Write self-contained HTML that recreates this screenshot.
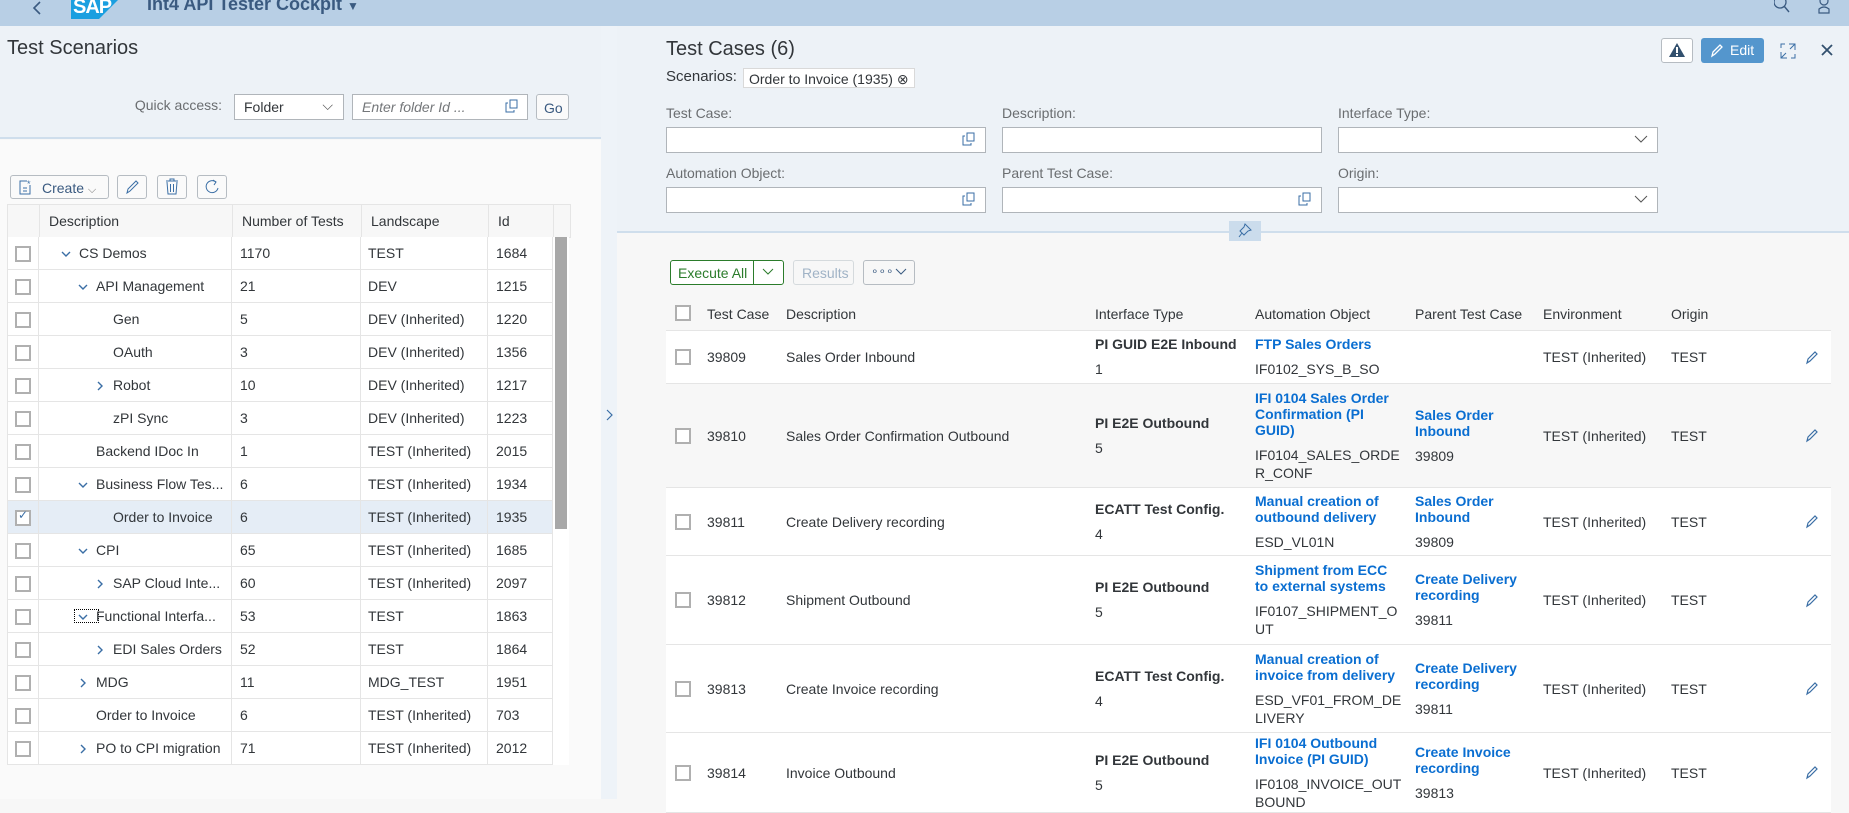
<!DOCTYPE html>
<html><head><meta charset="utf-8">
<style>
*{box-sizing:border-box;margin:0;padding:0}
body{width:1849px;height:799px;overflow:hidden;font-family:"Liberation Sans",sans-serif;font-size:14px;color:#32363a;background:#f7f7f7;position:relative}
.a{position:absolute}
.hdr{left:0;top:0;width:1849px;height:26px;background:#b8cfe5}
.lt{left:0;top:26px;width:601px;height:112px;background:#edf2f7}
.lb{left:0;top:140px;width:601px;height:659px;background:#fafafa}
.strip{left:601px;top:26px;width:16px;height:773px;background:#eef3f8}
.rt{left:617px;top:26px;width:1232px;height:206px;background:#edf2f7}
.rb{left:617px;top:234px;width:1232px;height:565px;background:#f7f7f7}
.line{height:2px;background:#cfdeec}
.inp{background:#fff;border:1px solid #b0b5ba;height:26px}
.btn{border:1px solid #b6bcc2;border-radius:3px;background:#fafafa}
.lbl{color:#6a6d70;font-size:14px}
.cb{width:16px;height:16px;border:2px solid #b0b0b0;background:#fff}
table.lt2{border-collapse:collapse;position:absolute;left:7px;top:204px;background:#fff}
table.lt2 td{height:33px;border:1px solid #e5e5e5;padding:0 0 0 9px;white-space:nowrap;font-size:14px}
table.lt2 tr.h td{background:#f7f7f7;color:#32363a}
.rw{position:absolute;left:666px;width:1165px;background:#fff;border-bottom:1px solid #e5e5e5}
.c{position:absolute;top:0;height:100%;display:flex;flex-direction:column;justify-content:center}
.b{font-weight:bold;line-height:16px}
.lk{color:#0a6ed1;font-weight:bold;line-height:16px}
.t{line-height:18px;margin-top:8px}
</style></head><body>
<div class="a hdr"></div>
<svg class="a" style="left:30px;top:0" width="14" height="18"><path d="M10 2 L4 8 L10 14" stroke="#3a5a80" stroke-width="1.6" fill="none"/></svg>
<svg class="a" style="left:71px;top:0" width="47" height="19"><polygon points="0,0 47,0 28,19 0,19" fill="#1a9fe0"/><text x="2" y="13" font-family="Liberation Sans" font-weight="bold" font-size="20" fill="#fff" letter-spacing="-1">SAP</text></svg>
<div class="a" style="left:147px;top:-6px;font-size:18px;font-weight:bold;color:#3a5a80">Int4 API Tester Cockpit <span style="font-size:12px">▼</span></div>
<svg class="a" style="left:1774px;top:0" width="16" height="14"><circle cx="6" cy="2" r="6" stroke="#3a5a80" stroke-width="1.3" fill="none"/><path d="M10 6 L15 12" stroke="#3a5a80" stroke-width="1.4"/></svg>
<svg class="a" style="left:1818px;top:0" width="12" height="14"><circle cx="6" cy="1" r="4" stroke="#3a5a80" stroke-width="1.2" fill="none"/><path d="M1 13 V9 Q6 5 11 9 V13 Z" stroke="#3a5a80" stroke-width="1.2" fill="none"/></svg>

<div class="a lt"></div>
<div class="a line" style="left:0;top:137px;width:601px"></div>
<div class="a lb"></div>
<div class="a strip"></div>
<svg class="a" style="left:604px;top:408px" width="10" height="14"><path d="M3 2 L8 7 L3 12" stroke="#3a6ea5" stroke-width="1.2" fill="none"/></svg>
<div class="a" style="left:7px;top:37px;font-size:20px;color:#32363a">Test Scenarios</div>
<div class="a lbl" style="left:100px;width:122px;text-align:right;top:97px;font-size:14px">Quick access:</div>
<div class="a inp" style="left:234px;top:94px;width:110px;padding:4px 9px">Folder<span style="position:absolute;right:10px;top:2px;color:#555">⌵</span></div>
<div class="a inp" style="left:352px;top:94px;width:176px;padding:4px 9px;color:#74777a;font-style:italic">Enter folder Id ...</div>
<svg class="a" style="left:505px;top:99px" width="14" height="14"><rect x="5" y="1" width="7" height="8" stroke="#3a6ea5" fill="none"/><path d="M3 4 H1 V13 H9 V11" stroke="#3a6ea5" fill="none"/></svg>
<div class="a btn" style="left:536px;top:94px;width:33px;height:26px;padding:5px 7px;color:#3a5a80">Go</div>

<div class="a btn" style="left:10px;top:175px;width:99px;height:24px;padding:4px 0 0 31px;color:#3a5a80">Create <span style="color:#777;font-size:11px">⌵</span></div>
<svg class="a" style="left:17px;top:179px" width="16" height="16"><path d="M10 2 H3 V15 H13 V6" stroke="#3a6ea5" fill="none"/><path d="M6 9H10M6 12H10" stroke="#3a6ea5"/><text x="10" y="8" font-size="9" fill="#3a6ea5">*</text></svg>
<div class="a btn" style="left:117px;top:175px;width:30px;height:24px"></div>
<svg class="a" style="left:124px;top:179px" width="16" height="16"><path d="M3 14 L4 10 L12 2 L14 4 L6 12 Z" stroke="#3a6ea5" fill="none"/></svg>
<div class="a btn" style="left:157px;top:175px;width:30px;height:24px"></div>
<svg class="a" style="left:164px;top:178px" width="16" height="17"><path d="M2 3H14M6 3V1H10V3M3 4 L4 16 H12 L13 4" stroke="#3a6ea5" fill="none"/><path d="M6.5 6V14M9.5 6V14" stroke="#3a6ea5"/></svg>
<div class="a btn" style="left:197px;top:175px;width:30px;height:24px"></div>
<svg class="a" style="left:204px;top:179px" width="16" height="16"><path d="M12 3 A6 6 0 1 0 14 9" stroke="#3a6ea5" fill="none"/><path d="M9 1 L12 3 L10 6" stroke="#3a6ea5" fill="none"/></svg>

<table class="lt2">
<tr class="h"><td style="width:32px"></td><td style="width:193px">Description</td><td style="width:129px">Number of Tests</td><td style="width:127px">Landscape</td><td style="width:65px">Id</td><td style="width:17px;padding:0;background:#f7f7f7"></td></tr>
</table>
<div id="ltrows"></div>
<div class="a" style="left:552px;top:237px;width:17px;height:528px;background:#fff;border-left:1px solid #e5e5e5"></div>
<div class="a" style="left:555px;top:237px;width:12px;height:292px;background:#a8a8a8"></div>

<div class="a rt"></div>
<div class="a line" style="left:617px;top:231px;width:1232px"></div>
<div class="a rb"></div>
<div class="a" style="left:666px;top:38px;font-size:20px">Test Cases (6)</div>
<div class="a" style="left:666px;top:68px;font-size:15px">Scenarios:</div>
<div class="a" style="left:743px;top:68px;height:20px;padding:2px 5px;border:1px solid #d9d9d9;background:#fff;font-size:14px">Order to Invoice (1935) ⊗</div>
<div class="a btn" style="left:1661px;top:38px;width:32px;height:25px;background:#fff"></div>
<svg class="a" style="left:1668px;top:42px" width="18" height="16"><path d="M9 1 L17 15 H1 Z" fill="#32506e"/><rect x="8" y="5" width="2" height="6" fill="#fff"/><rect x="8" y="12" width="2" height="2" fill="#fff"/></svg>
<div class="a" style="left:1701px;top:38px;width:63px;height:25px;background:#5496cd;border-radius:3px;color:#fff;padding:4px 0 0 29px;font-size:14px">Edit</div>
<svg class="a" style="left:1710px;top:43px" width="14" height="15"><path d="M2 13 L3 9 L10 2 L12 4 L5 11 Z" stroke="#fff" fill="none" stroke-width="1.3"/></svg>
<svg class="a" style="left:1780px;top:43px" width="16" height="16"><path d="M9 1H15V7M15 1L10 6M1 9V15H7M1 15L6 10M1 5V1H5M11 15H15V11" stroke="#3a6ea5" fill="none"/></svg>
<svg class="a" style="left:1821px;top:44px" width="12" height="12"><path d="M1 1L11 11M11 1L1 11" stroke="#32506e" stroke-width="1.8"/></svg>

<div class="a lbl" style="left:666px;top:105px">Test Case:</div>
<div class="a lbl" style="left:1002px;top:105px">Description:</div>
<div class="a lbl" style="left:1338px;top:105px">Interface Type:</div>
<div class="a inp" style="left:666px;top:127px;width:320px"></div>
<div class="a inp" style="left:1002px;top:127px;width:320px"></div>
<div class="a inp" style="left:1338px;top:127px;width:320px"></div>
<div class="a lbl" style="left:666px;top:165px">Automation Object:</div>
<div class="a lbl" style="left:1002px;top:165px">Parent Test Case:</div>
<div class="a lbl" style="left:1338px;top:165px">Origin:</div>
<div class="a inp" style="left:666px;top:187px;width:320px"></div>
<div class="a inp" style="left:1002px;top:187px;width:320px"></div>
<div class="a inp" style="left:1338px;top:187px;width:320px"></div>
<svg class="a" style="left:962px;top:132px" width="14" height="14"><rect x="5" y="1" width="7" height="8" stroke="#3a6ea5" fill="none"/><path d="M3 4 H1 V13 H9 V11" stroke="#3a6ea5" fill="none"/></svg>
<svg class="a" style="left:962px;top:192px" width="14" height="14"><rect x="5" y="1" width="7" height="8" stroke="#3a6ea5" fill="none"/><path d="M3 4 H1 V13 H9 V11" stroke="#3a6ea5" fill="none"/></svg>
<svg class="a" style="left:1298px;top:192px" width="14" height="14"><rect x="5" y="1" width="7" height="8" stroke="#3a6ea5" fill="none"/><path d="M3 4 H1 V13 H9 V11" stroke="#3a6ea5" fill="none"/></svg>
<svg class="a" style="left:1634px;top:134px" width="14" height="10"><path d="M1 2 L7 8 L13 2" stroke="#555" fill="none"/></svg>
<svg class="a" style="left:1634px;top:194px" width="14" height="10"><path d="M1 2 L7 8 L13 2" stroke="#555" fill="none"/></svg>
<div class="a" style="left:1229px;top:221px;width:32px;height:20px;background:#cbdcec"></div>
<svg class="a" style="left:1238px;top:223px" width="14" height="16"><path d="M7 1 L13 7 L10 8 L6 12 L2 8 L6 4 Z M4 10 L1 14" stroke="#3a6ea5" fill="none"/></svg>

<div class="a" style="left:670px;top:260px;width:114px;height:25px;border:1px solid #2b7c2b;border-radius:3px;background:#fff;color:#2b7c2b;padding:4px 0 0 7px">Execute All</div>
<div class="a" style="left:753px;top:260px;width:1px;height:25px;background:#2b7c2b"></div>
<svg class="a" style="left:762px;top:268px" width="12" height="8"><path d="M1 1 L6 6 L11 1" stroke="#2b7c2b" fill="none"/></svg>
<div class="a" style="left:793px;top:260px;width:61px;height:25px;border:1px solid #d5dadd;border-radius:3px;color:#a0b3c6;padding:4px 0 0 8px">Results</div>
<div class="a btn" style="left:863px;top:260px;width:52px;height:25px;color:#3a5a80;padding:3px 0 0 7px;font-size:12px;background:#f7f7f7">∘∘∘</div>
<svg class="a" style="left:895px;top:268px" width="12" height="8"><path d="M1 1 L6 6 L11 1" stroke="#3a5a80" fill="none"/></svg>

<div class="a" style="left:666px;top:297px;width:1165px;height:34px;border-bottom:1px solid #e5e5e5"></div>
<div class="a cb" style="left:675px;top:305px"></div>
<div class="a" style="left:707px;top:306px">Test Case</div>
<div class="a" style="left:786px;top:306px">Description</div>
<div class="a" style="left:1095px;top:306px">Interface Type</div>
<div class="a" style="left:1255px;top:306px">Automation Object</div>
<div class="a" style="left:1415px;top:306px">Parent Test Case</div>
<div class="a" style="left:1543px;top:306px">Environment</div>
<div class="a" style="left:1671px;top:306px">Origin</div>
<div id="rrows"></div>

<script>
var L=[["CS Demos",0,"v","1170","TEST","1684"],["API Management",1,"v","21","DEV","1215"],["Gen",2,"","5","DEV (Inherited)","1220"],["OAuth",2,"","3","DEV (Inherited)","1356"],["Robot",2,">","10","DEV (Inherited)","1217"],["zPI Sync",2,"","3","DEV (Inherited)","1223"],["Backend IDoc In",1,"","1","TEST (Inherited)","2015"],["Business Flow Tes...",1,"v","6","TEST (Inherited)","1934"],["Order to Invoice",2,"","6","TEST (Inherited)","1935",1],["CPI",1,"v","65","TEST (Inherited)","1685"],["SAP Cloud Inte...",2,">","60","TEST (Inherited)","2097"],["Functional Interfa...",1,"vf","53","TEST","1863"],["EDI Sales Orders",2,">","52","TEST","1864"],["MDG",1,">","11","MDG_TEST","1951"],["Order to Invoice",1,"","6","TEST (Inherited)","703"],["PO to CPI migration",1,">","71","TEST (Inherited)","2012"]];
var h="";
L.forEach(function(r,i){var y=237+i*33,bg=r[6]?"#e5edf6":"#fff";
h+='<div class="a" style="left:7px;top:'+y+'px;width:545px;height:33px;background:'+bg+';border-bottom:1px solid #e5e5e5"></div>';
[38,231,360,487,552].forEach(function(x){h+='<div class="a" style="left:'+x+'px;top:'+y+'px;width:1px;height:33px;background:#e5e5e5"></div>'});
h+='<div class="a" style="left:7px;top:'+y+'px;width:1px;height:33px;background:#e5e5e5"></div>';
h+='<div class="a cb" style="left:15px;top:'+(y+9)+'px">'+(r[6]?'<span style="position:absolute;left:1px;top:-4px;color:#3a6ea5;font-size:12px">✓</span>':'')+'</div>';
var tx=79+r[1]*17;
if(r[2]){var ax=tx-18;var p=r[2].indexOf("v")==0?'M1 3 L5 7 L9 3':'M3 1 L7 5 L3 9';
h+='<svg class="a" style="left:'+ax+'px;top:'+(y+12)+'px" width="10" height="10"><path d="'+p+'" stroke="#3a6ea5" stroke-width="1.4" fill="none"/></svg>';
if(r[2]=="vf")h+='<div class="a" style="left:'+(ax-4)+'px;top:'+(y+9)+'px;width:25px;height:14px;border:1px dotted #000"></div>';}
h+='<div class="a" style="left:'+tx+'px;top:'+(y+8)+'px">'+r[0]+'</div>';
h+='<div class="a" style="left:240px;top:'+(y+8)+'px">'+r[3]+'</div><div class="a" style="left:368px;top:'+(y+8)+'px">'+r[4]+'</div><div class="a" style="left:496px;top:'+(y+8)+'px">'+r[5]+'</div>';});
document.getElementById("ltrows").innerHTML=h;
var R=[[331,53,"39809","Sales Order Inbound","PI GUID E2E Inbound","1","FTP Sales Orders","IF0102_SYS_B_SO","","","#fff"],
[384,104,"39810","Sales Order Confirmation Outbound","PI E2E Outbound","5","IFI 0104 Sales Order<br>Confirmation (PI<br>GUID)","IF0104_SALES_ORDE<br>R_CONF","Sales Order<br>Inbound","39809","#f7f7f7"],
[488,68,"39811","Create Delivery recording","ECATT Test Config.","4","Manual creation of<br>outbound delivery","ESD_VL01N","Sales Order<br>Inbound","39809","#fff"],
[556,89,"39812","Shipment Outbound","PI E2E Outbound","5","Shipment from ECC<br>to external systems","IF0107_SHIPMENT_O<br>UT","Create Delivery<br>recording","39811","#fff"],
[645,88,"39813","Create Invoice recording","ECATT Test Config.","4","Manual creation of<br>invoice from delivery","ESD_VF01_FROM_DE<br>LIVERY","Create Delivery<br>recording","39811","#fff"],
[733,80,"39814","Invoice Outbound","PI E2E Outbound","5","IFI 0104 Outbound<br>Invoice (PI GUID)","IF0108_INVOICE_OUT<br>BOUND","Create Invoice<br>recording","39813","#fff"]];
var g="";
R.forEach(function(r){g+='<div class="rw" style="top:'+r[0]+'px;height:'+r[1]+'px;background:'+r[10]+'">'+
'<div class="c" style="left:9px"><div class="cb"></div></div>'+
'<div class="c" style="left:41px">'+r[2]+'</div><div class="c" style="left:120px">'+r[3]+'</div>'+
'<div class="c" style="left:429px"><div class="b">'+r[4]+'</div><div class="t">'+r[5]+'</div></div>'+
'<div class="c" style="left:589px"><div class="lk">'+r[6]+'</div><div class="t">'+r[7]+'</div></div>'+
(r[8]?'<div class="c" style="left:749px"><div class="lk">'+r[8]+'</div><div class="t">'+r[9]+'</div></div>':'')+
'<div class="c" style="left:877px">TEST (Inherited)</div><div class="c" style="left:1005px">TEST</div>'+
'<div class="c" style="left:1139px"><svg width="14" height="15"><path d="M2 13 L3 9 L10 2 L12 4 L5 11 Z" stroke="#3a6ea5" fill="none" stroke-width="1.2"/></svg></div></div>';});
document.getElementById("rrows").innerHTML=g;
</script>
</body></html>
